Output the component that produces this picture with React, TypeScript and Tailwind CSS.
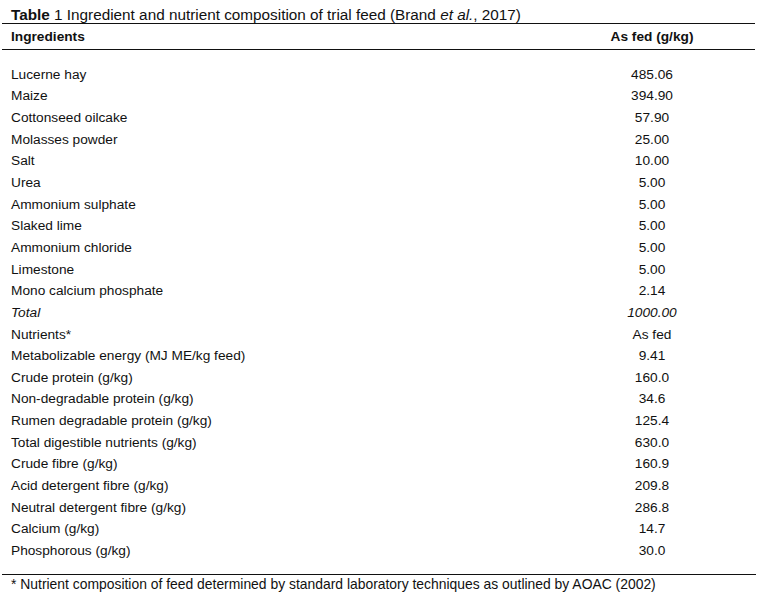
const ingredients: [string, string][] = [
  ["Lucerne hay", "485.06"],
  ["Maize", "394.90"],
  ["Cottonseed oilcake", "57.90"],
  ["Molasses powder", "25.00"],
  ["Salt", "10.00"],
  ["Urea", "5.00"],
  ["Ammonium sulphate", "5.00"],
  ["Slaked lime", "5.00"],
  ["Ammonium chloride", "5.00"],
  ["Limestone", "5.00"],
  ["Mono calcium phosphate", "2.14"],
]

const nutrients: [string, string][] = [
  ["Metabolizable energy (MJ ME/kg feed)", "9.41"],
  ["Crude protein (g/kg)", "160.0"],
  ["Non-degradable protein (g/kg)", "34.6"],
  ["Rumen degradable protein (g/kg)", "125.4"],
  ["Total digestible nutrients (g/kg)", "630.0"],
  ["Crude fibre (g/kg)", "160.9"],
  ["Acid detergent fibre (g/kg)", "209.8"],
  ["Neutral detergent fibre (g/kg)", "286.8"],
  ["Calcium (g/kg)", "14.7"],
  ["Phosphorous (g/kg)", "30.0"],
]

function Row({ label, value, italic }: { label: string; value: string; italic?: boolean }) {
  return (
    <div className={`grid grid-cols-[560px_184px] h-[21.65px] items-center ${italic ? "italic" : ""}`}>
      <div className="pl-[11px]">{label}</div>
      <div className="text-center">{value}</div>
    </div>
  )
}

export default function App() {
  return (
    <div className="w-[759px] h-[599px] bg-white text-[#111] font-['Liberation_Sans',Arial,sans-serif] text-[13.7px] leading-[16px]">
      <div className="pt-[6px] pl-[11px] text-[15.3px] leading-[17px] whitespace-nowrap">
        <span className="font-bold">Table</span> 1 Ingredient and nutrient composition of trial feed (Brand{" "}
        <i>et al.</i>, 2017)
      </div>
      <div className="border-t border-[#111] ml-[2px] mr-[4px]" />
      <div className="grid grid-cols-[558px_184px] h-[26px] items-center font-bold border-b border-[#111] ml-[2px] mr-[4px]">
        <div className="pl-[9px]">Ingredients</div>
        <div className="text-center">As fed (g/kg)</div>
      </div>
      <div className="pt-[14px]">
        {ingredients.map(([l, v]) => (
          <Row key={l} label={l} value={v} />
        ))}
        <Row label="Total" value="1000.00" italic />
        <Row label="Nutrients*" value="As fed" />
        {nutrients.map(([l, v]) => (
          <Row key={l} label={l} value={v} />
        ))}
      </div>
      <div className="mt-[12px] border-t border-[#111] ml-[2px] mr-[3px]" />
      <div className="pl-[11px] pt-[1px] text-[13.9px] whitespace-nowrap">
        * Nutrient composition of feed determined by standard laboratory techniques as outlined by AOAC (2002)
      </div>
    </div>
  )
}
